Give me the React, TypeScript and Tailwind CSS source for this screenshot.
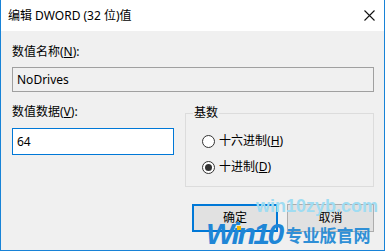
import React from "react";

const font = { fontFamily: '"Noto Sans", "Noto Sans CJK SC", sans-serif' };

function Radio({ checked, label, acc }: { checked?: boolean; label: string; acc: string }) {
  return (
    <div className="flex items-center h-[16px]">
      <span className="w-[13px] h-[13px] rounded-full border border-[#333333] bg-white flex items-center justify-center">
        {checked && <span className="w-[7px] h-[7px] rounded-full bg-[#333333]" />}
      </span>
      <span className="ml-[4px] text-[12px] leading-[16px] text-black">
        {label}(<span className="underline">{acc}</span>)
      </span>
    </div>
  );
}

export default function App() {
  return (
    <div
      className="relative w-[385px] h-[251px] overflow-hidden border-x border-b border-[#1883d7] bg-[#f0f0f0] flex flex-col"
      style={font}
    >
      {/* Title bar */}
      <div className="h-[31px] bg-white flex items-center justify-between pl-[7px] pr-[9px]">
        <span className="text-[12px] leading-[16px] text-black">编辑 DWORD (32 位)值</span>
        <svg width="11" height="11" viewBox="0 0 11 11" className="mt-[-1px]">
          <path d="M0.5 0.5 L10.5 10.5 M10.5 0.5 L0.5 10.5" stroke="#111" strokeWidth="1.1" fill="none" />
        </svg>
      </div>

      {/* Body */}
      <div className="flex flex-col pl-[11px] pr-[10px] pt-[13px] text-[12px] leading-[16px] text-black">
        <div>
          数值名称(<span className="underline">N</span>):
        </div>
        <div className="mt-[7px] h-[25px] border border-[#a0a0a0] bg-[#f0f0f0] flex items-center pl-[4px]">
          NoDrives
        </div>

        <div className="mt-[12px] flex justify-between">
          <div className="w-[162px] flex flex-col">
            <div>
              数值数据(<span className="underline">V</span>):
            </div>
            <div className="mt-[8px] h-[27px] border border-[#0078d7] bg-white flex items-center pl-[4px]">
              64
            </div>
          </div>

          <div className="relative mt-[9px] w-[189px] h-[74px] border border-[#dcdcdc] flex flex-col pl-[16px] pt-[19px] gap-[10px]">
            <span className="absolute -top-[9px] left-[7px] px-[1px] bg-[#f0f0f0] leading-[16px]">基数</span>
            <Radio label="十六进制" acc="H" />
            <Radio checked label="十进制" acc="D" />
          </div>
        </div>

        <div className="mt-[17px] flex justify-end gap-[9px]">
          <button className="w-[86px] h-[28px] border-2 border-[#0078d7] bg-[#e1e1e1] text-[12px] leading-[16px] text-black">
            确定
          </button>
          <button className="w-[87px] h-[28px] border border-[#adadad] bg-[#e1e1e1] text-[12px] leading-[16px] text-black">
            取消
          </button>
        </div>
      </div>

      {/* Watermark overlay */}
      <div
        className="absolute left-[255px] top-[196px] text-[18px] leading-[20px] font-bold text-[#9fdcf2] pointer-events-none"
        style={{ fontFamily: '"Liberation Sans", Arial, sans-serif' }}
      >
        win10zyb.com
      </div>
      <div className="absolute left-[205px] top-[219px] flex items-start pointer-events-none">
        <span
          className="relative text-[30px] leading-[30px] font-bold italic tracking-[-2.5px] text-[#1f86d6]"
          style={{ fontFamily: '"Liberation Sans", Arial, sans-serif' }}
        >
          Win10
          <span className="absolute left-[31px] top-[7px] w-[4px] h-[4px] bg-[#f5b700]" />
        </span>
        <span
          className="ml-[4px] mt-[6px] text-[17px] leading-[20px] font-bold text-[#2f8fd6]"
          style={{ fontFamily: '"Noto Sans CJK SC", sans-serif' }}
        >
          专业版官网
        </span>
      </div>
    </div>
  );
}
